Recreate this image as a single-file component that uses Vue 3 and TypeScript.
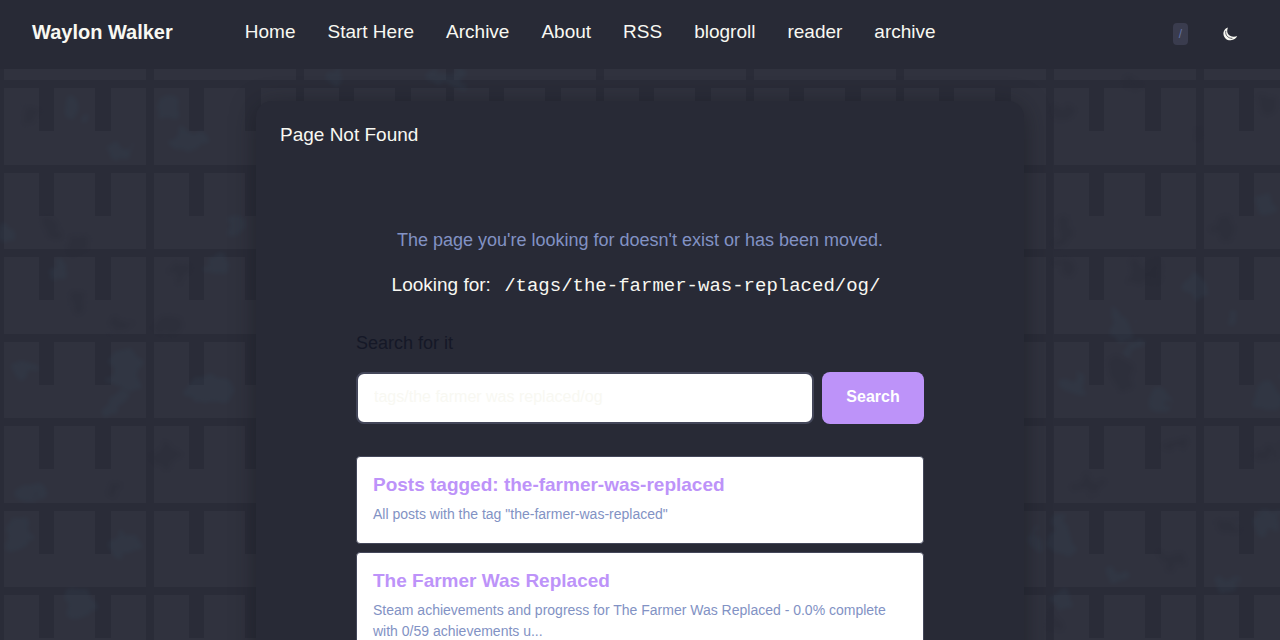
<script setup lang="ts">
import { ref } from 'vue'

interface Result {
  title: string
  description: string
  href: string
}

const links: string[] = ['Home', 'Start Here', 'Archive', 'About', 'RSS', 'blogroll', 'reader', 'archive']

const missingPath = '/tags/the-farmer-was-replaced/og/'
const query = ref('tags/the farmer was replaced/og')

const results: Result[] = [
  {
    title: 'Posts tagged: the-farmer-was-replaced',
    description: 'All posts with the tag "the-farmer-was-replaced"',
    href: '#posts-tagged',
  },
  {
    title: 'The Farmer Was Replaced',
    description: 'Steam achievements and progress for The Farmer Was Replaced - 0.0% complete with 0/59 achievements u...',
    href: '#the-farmer-was-replaced',
  },
]

// Weathering on the wall: x, y, rx, ry of each faint patch
const lightSpots: number[][] = [
  [74, 110, 10, 14], [118, 150, 12, 8], [190, 140, 18, 10], [168, 108, 10, 12],
  [6, 232, 9, 8], [234, 226, 9, 11], [60, 272, 9, 10], [215, 264, 11, 9],
  [24, 370, 12, 8], [126, 370, 16, 22], [114, 402, 14, 10], [210, 390, 22, 14],
  [30, 494, 12, 7], [18, 535, 12, 16], [124, 546, 12, 12], [78, 606, 16, 13],
  [1070, 386, 16, 10], [1158, 402, 11, 9], [1198, 286, 14, 13], [1120, 325, 12, 16],
  [1268, 394, 14, 16], [1062, 538, 11, 24], [1034, 540, 10, 8], [1268, 524, 14, 10],
  [1116, 576, 14, 7], [1226, 582, 11, 6], [1234, 316, 9, 7], [1266, 205, 15, 8],
  [1138, 345, 9, 6], [335, 78, 6, 8], [450, 78, 18, 8], [1060, 600, 12, 8],
]
const darkSpots: number[][] = [
  [28, 115, 8, 7], [52, 230, 9, 12], [78, 244, 12, 8], [76, 302, 8, 9],
  [118, 324, 10, 7], [166, 324, 12, 8], [182, 272, 12, 8], [166, 455, 10, 18],
  [1066, 112, 10, 8], [1065, 230, 9, 13], [1066, 268, 9, 7], [1142, 272, 14, 12],
  [1225, 228, 9, 12], [1266, 104, 7, 9], [1088, 485, 14, 8], [1172, 560, 11, 7],
  [1226, 528, 10, 7], [1268, 455, 9, 8], [1174, 444, 12, 7], [1196, 135, 6, 9],
  [1136, 84, 7, 5], [118, 490, 8, 6], [1120, 370, 14, 16], [1056, 622, 8, 9],
]
</script>

<template>
  <div class="page">
    <svg class="wall" width="100%" height="100%" aria-hidden="true">
      <defs>
        <pattern id="bricks" width="150" height="169" y="88" patternUnits="userSpaceOnUse">
          <path
            fill="#30323e"
            d="M4 0H39V43H54V0H95V43H111V0H146V77H4ZM4 85H39V128H54V85H95V128H111V85H146V161H4Z"
          />
        </pattern>
        <pattern id="ledge" width="150" height="80" patternUnits="userSpaceOnUse">
          <path fill="#30323e" d="M4 0H146V80H4Z" />
        </pattern>
        <filter id="soften" x="-5%" y="-5%" width="110%" height="110%" color-interpolation-filters="sRGB">
          <feTurbulence type="fractalNoise" baseFrequency="0.06" numOctaves="2" seed="4" result="noise" />
          <feDisplacementMap in="SourceGraphic" in2="noise" scale="26" xChannelSelector="R" yChannelSelector="G" />
          <feGaussianBlur stdDeviation="2" />
        </filter>
      </defs>
      <rect width="100%" height="100%" fill="#2a2c38" />
      <rect width="100%" height="80" fill="url(#ledge)" />
      <rect y="88" width="100%" height="100%" fill="url(#bricks)" />
      <g filter="url(#soften)" opacity="0.2">
        <ellipse
          v-for="([cx, cy, rx, ry], i) in lightSpots" :key="`l${i}`"
          :cx="cx" :cy="cy" :rx="rx" :ry="ry" fill="#35485a"
        />
      </g>
      <g filter="url(#soften)" opacity="0.25">
        <ellipse
          v-for="([cx, cy, rx, ry], i) in darkSpots" :key="`d${i}`"
          :cx="cx" :cy="cy" :rx="rx" :ry="ry" fill="#262834"
        />
      </g>
    </svg>

    <header class="bar">
      <a class="brand" href="#home">Waylon Walker</a>
      <nav class="nav" aria-label="Main">
        <a v-for="link in links" :key="link" :href="`#${link}`">{{ link }}</a>
      </nav>
      <div class="tools">
        <kbd>/</kbd>
        <button class="theme" type="button" aria-label="Toggle theme">
          <svg width="16" height="16" viewBox="0 0 16 16" fill="none" aria-hidden="true">
            <path
              d="M6 1.4C2.8 2.4 1.1 5.2 1.5 8.4C2 12 5.2 14.5 8.7 14.2C11.7 14 14.1 12.6 15.2 10C13.1 11 10.2 11 8 9.7C5.2 8 4.5 4.7 6 1.4Z"
              fill="#f8f8f2"
            />
            <path d="M3.8 4.8C2.9 9.2 6.2 12.4 10.4 12.4" stroke="#3c3e4a" stroke-width="0.8" />
          </svg>
        </button>
      </div>
    </header>

    <main class="sheet">
      <h1>Page Not Found</h1>
      <div class="content">
        <p class="lead">The page you're looking for doesn't exist or has been moved.</p>
        <p class="wanted">Looking for: <code>{{ missingPath }}</code></p>
        <form @submit.prevent>
          <label for="search">Search for it</label>
          <div class="row">
            <input id="search" v-model="query" type="text">
            <button class="go" type="submit">Search</button>
          </div>
        </form>
        <ul class="results">
          <li v-for="result in results" :key="result.href">
            <a :href="result.href">
              <strong>{{ result.title }}</strong>
              <span>{{ result.description }}</span>
            </a>
          </li>
        </ul>
      </div>
    </main>
  </div>
</template>

<style>
body {
  margin: 0;
  background: #282a36;
}
</style>

<style scoped>
.page {
  position: relative;
  height: 100vh;
  overflow: hidden;
  box-sizing: border-box;
  color: #f8f8f2;
  font-family: "Liberation Sans", Arial, sans-serif;
  font-size: 19px;
  line-height: 30px;
}

.wall {
  position: absolute;
  inset: 0;
}

.bar {
  position: relative;
  display: flex;
  align-items: center;
  box-sizing: border-box;
  min-height: 69px;
  padding: 0 32px 6px;
  background: #282a36;
}

.brand {
  margin-right: 72px;
  font-size: 20px;
  font-weight: 700;
}

.nav {
  display: flex;
  gap: 32px;
}

a {
  color: inherit;
  text-decoration: none;
}

.tools {
  display: flex;
  align-items: center;
  gap: 26px;
  margin-left: auto;
  padding: 5px 2px 0 0;
}

kbd {
  padding: 0 6px;
  border-radius: 4px;
  background: #3a3c4e;
  color: #6272a4;
  font-family: "Liberation Sans", Arial, sans-serif;
  font-size: 12px;
  line-height: 22px;
}

.theme {
  display: flex;
  padding: 8px;
  border: 0;
  background: none;
}

.sheet {
  position: relative;
  box-sizing: border-box;
  max-width: 768px;
  margin: 32px auto 0;
  padding: 19px 24px 48px;
  border-radius: 16px;
  background: #282a36;
  box-shadow: 0 4px 24px rgba(20, 21, 28, 0.5);
}

h1 {
  margin: 0;
  font-size: 19px;
  font-weight: 400;
}

.content {
  max-width: 568px;
  margin: 75px auto 0;
}

p {
  margin: 0;
  text-align: center;
}

.lead {
  color: #8292c4;
  font-size: 18px;
}

.wanted {
  margin-top: 15px;
}

code {
  padding: 4px 8px;
  font-family: "Liberation Mono", monospace;
  font-size: 19px;
}

label {
  display: block;
  margin-top: 27px;
  color: #151827;
  font-size: 18px;
}

.row {
  display: flex;
  gap: 8px;
  margin-top: 14px;
}

input {
  flex: 1;
  min-width: 0;
  height: 52px;
  box-sizing: border-box;
  padding: 0 16px 2px;
  border: 2px solid #44475a;
  border-radius: 8px;
  background: #fff;
  color: #f8f8f2;
  font: inherit;
  font-size: 16px;
}

.go {
  min-width: 102px;
  padding: 0 24px 2px;
  border: 0;
  border-radius: 8px;
  background: #bd93f9;
  color: #fff;
  font: inherit;
  font-size: 16px;
  font-weight: 700;
}

.results {
  display: grid;
  gap: 8px;
  margin: 32px 0 0;
  padding: 0;
  list-style: none;
}

.results a {
  display: block;
  padding: 13px 16px 18px;
  border: 1px solid #44475a;
  border-radius: 4px;
  background: #fff;
}

.results strong {
  display: block;
  margin-bottom: 4px;
  color: #bd93f9;
}

.results span {
  display: block;
  color: #8292c4;
  font-size: 14px;
  line-height: 21px;
}
</style>
